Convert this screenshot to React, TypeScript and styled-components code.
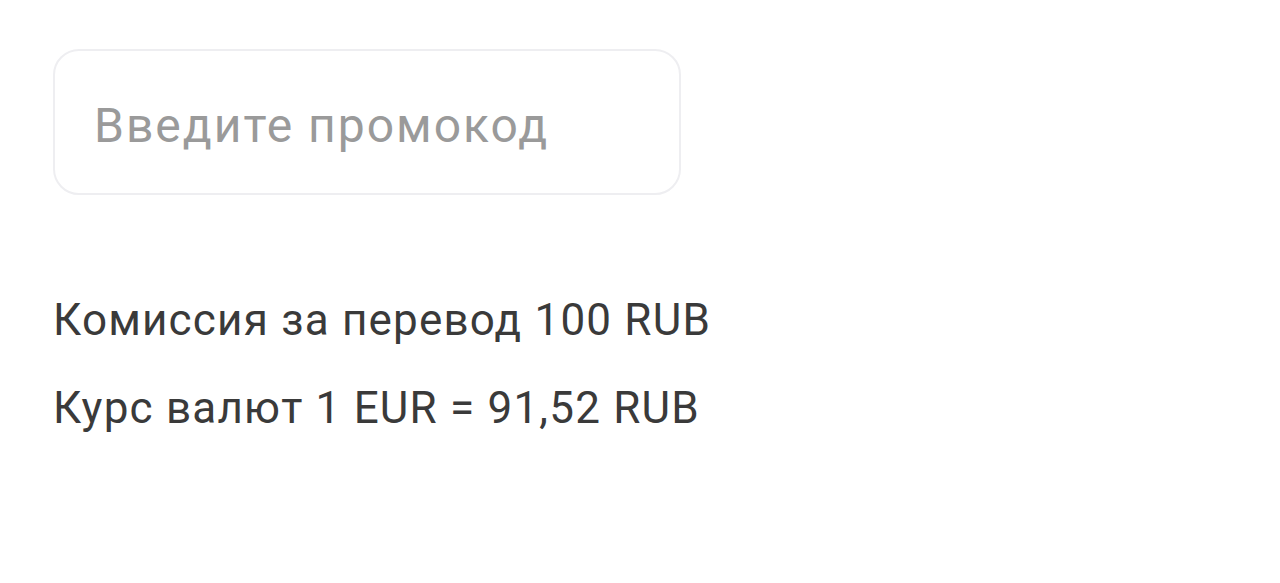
import React from "react";
import styled, { createGlobalStyle } from "styled-components";

const GlobalStyle = createGlobalStyle`
  html, body {
    margin: 0;
    padding: 0;
    background: #ffffff;
  }
  body {
    font-family: Roboto, "Liberation Sans", sans-serif;
  }
`;

const Page = styled.div`
  display: flex;
  flex-direction: column;
  align-items: flex-start;
  padding: 49px 0 0 53px;
  width: 1280px;
  height: 583px;
  box-sizing: border-box;
`;

const PromoInput = styled.input`
  box-sizing: border-box;
  width: 628px;
  height: 146px;
  border: 2px solid #eeeef1;
  border-radius: 26px;
  padding: 7px 0 0 39px;
  font-family: Roboto, "Liberation Sans", sans-serif;
  font-size: 48px;
  letter-spacing: 2px;
  color: #333333;
  background: #ffffff;
  outline: none;

  &::placeholder {
    color: #9a9a9a;
  }
`;

const InfoList = styled.div`
  display: flex;
  flex-direction: column;
  margin-top: 81px;
`;

const InfoLine = styled.div`
  font-family: Roboto, "Liberation Sans", sans-serif;
  font-size: 44px;
  letter-spacing: 1.2px;
  line-height: 88px;
  color: #3a3a3a;
  white-space: nowrap;
`;

export default function App() {
  return (
    <>
      <GlobalStyle />
      <Page>
        <PromoInput placeholder="Введите промокод" />
        <InfoList>
          <InfoLine>Комиссия за перевод 100 RUB</InfoLine>
          <InfoLine>Курс валют 1 EUR = 91,52 RUB</InfoLine>
        </InfoList>
      </Page>
    </>
  );
}
